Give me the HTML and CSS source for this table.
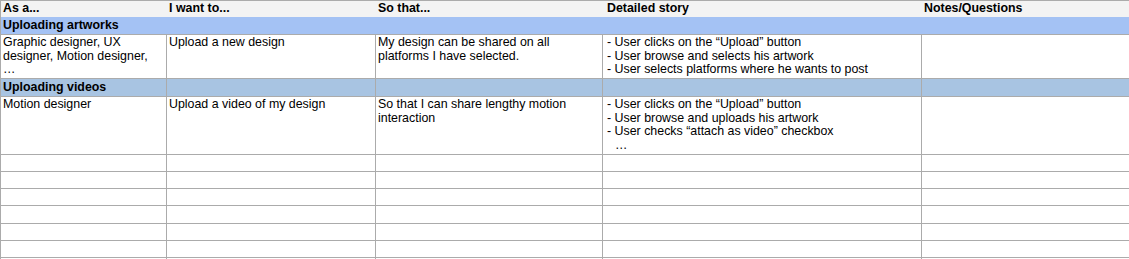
FILE: index.html
```html
<!DOCTYPE html>
<html lang="en">
<head>
<meta charset="utf-8">
<title>User stories</title>
<link rel="stylesheet" href="styles.css">
</head>
<body>
<div class="sheet">
  <div class="cell head">As a...</div>
  <div class="cell head">I want to...</div>
  <div class="cell head">So that...</div>
  <div class="cell head story">Detailed story</div>
  <div class="cell head">Notes/Questions</div>

  <div class="cell section section-a span-all">Uploading artworks</div>

  <div class="cell body">Graphic designer, UX<br>designer, Motion designer,<br>…</div>
  <div class="cell body">Upload a new design</div>
  <div class="cell body">My design can be shared on all<br>platforms I have selected.</div>
  <div class="cell body story">- User clicks on the “Upload” button<br>- User browse and selects his artwork<br>- User selects platforms where he wants to post</div>
  <div class="cell body"></div>

  <div class="cell section section-b">Uploading videos</div>
  <div class="cell section section-b"></div>
  <div class="cell section section-b"></div>
  <div class="cell section section-b"></div>
  <div class="cell section section-b"></div>

  <div class="cell body">Motion designer</div>
  <div class="cell body">Upload a video of my design</div>
  <div class="cell body">So that I can share lengthy motion<br>interaction</div>
  <div class="cell body story">- User clicks on the “Upload” button<br>- User browse and uploads his artwork<br>- User checks “attach as video” checkbox<br><span class="indent">…</span></div>
  <div class="cell body"></div>

  <div class="cell"></div><div class="cell"></div><div class="cell"></div><div class="cell"></div><div class="cell"></div>
  <div class="cell"></div><div class="cell"></div><div class="cell"></div><div class="cell"></div><div class="cell"></div>
  <div class="cell"></div><div class="cell"></div><div class="cell"></div><div class="cell"></div><div class="cell"></div>
  <div class="cell"></div><div class="cell"></div><div class="cell"></div><div class="cell"></div><div class="cell"></div>
  <div class="cell"></div><div class="cell"></div><div class="cell"></div><div class="cell"></div><div class="cell"></div>
  <div class="cell"></div><div class="cell"></div><div class="cell"></div><div class="cell"></div><div class="cell"></div>
  <div class="cell"></div><div class="cell"></div><div class="cell"></div><div class="cell"></div><div class="cell"></div>
</div>
</body>
</html>
```
FILE: styles.css
```css
html, body {
  margin: 0;
  padding: 0;
  background: #ffffff;
  overflow: hidden;
}

.sheet {
  display: grid;
  width: 1160px;
  grid-template-columns: 166px 209px 227px 319px 1fr;
  grid-template-rows: 16px 18px 44px 18px 58px 17px 17px 17px 18px 17px 17px 17px;
  border-top: 1px solid #ababab;
  border-left: 1px solid #ababab;
  font-family: "Liberation Sans", Arial, sans-serif;
  font-size: 12.4px;
  line-height: 13.5px;
  color: #000000;
}

.cell {
  box-sizing: border-box;
  border-right: 1px solid #ababab;
  border-bottom: 1px solid #ababab;
  padding: 0 2px;
  overflow: hidden;
  white-space: nowrap;
}

.head {
  background: #f3f3f3;
  border: none;
  font-weight: bold;
  padding-top: 1px;
}

.section {
  font-weight: bold;
  padding-top: 2px;
}

.section-a {
  background: #a4c2f4;
  border-right: none;
}

.section-b {
  background: #a8c4e2;
}

.span-all {
  grid-column: 1 / -1;
}

.body {
  padding-top: 1px;
}

.story {
  padding-left: 4px;
}

.indent {
  padding-left: 8px;
}
```
